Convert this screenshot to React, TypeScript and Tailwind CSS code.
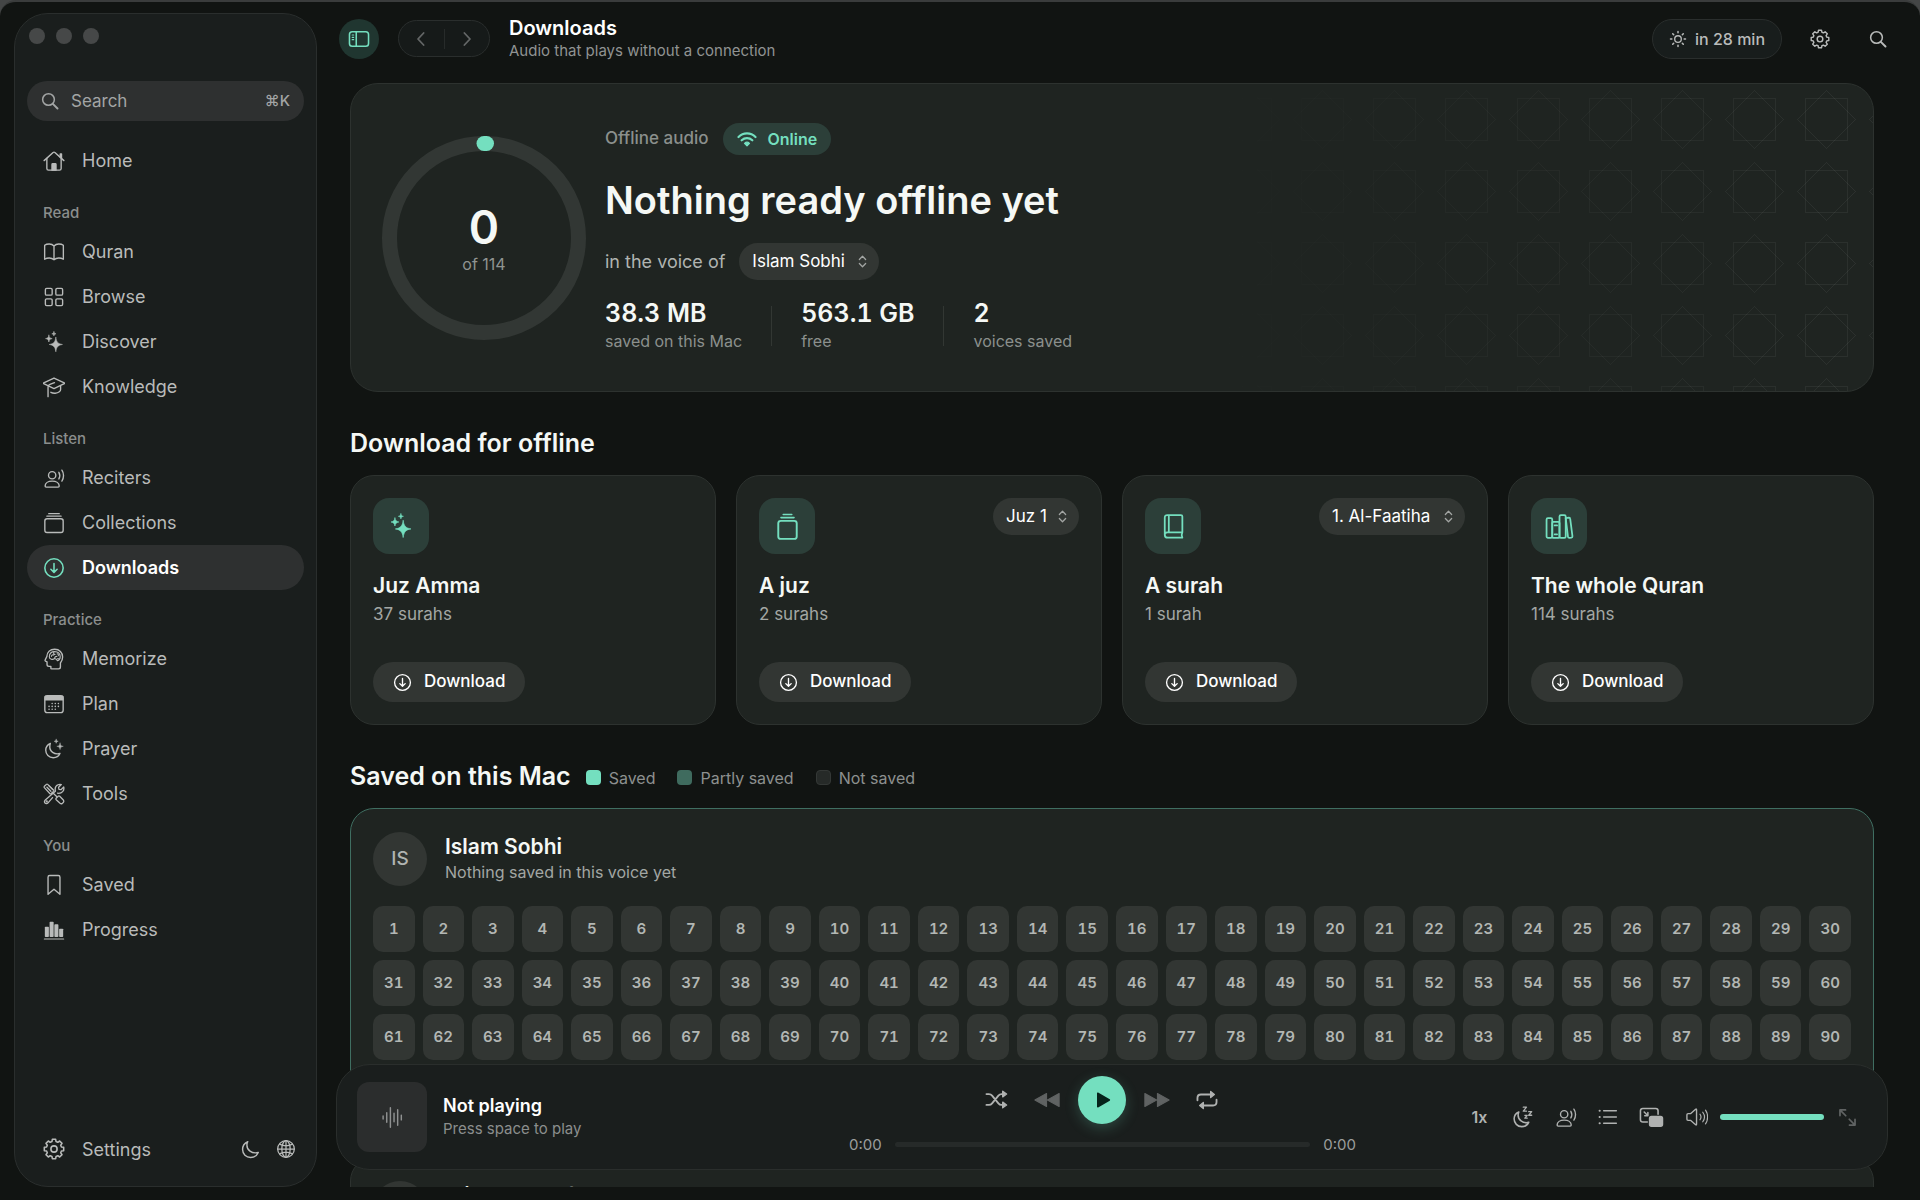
import type { ReactNode } from "react";

type IconProps = { className?: string };

const Svg = ({ className = "size-6", children }: { className?: string; children: ReactNode }) => (
  <svg
    viewBox="0 0 24 24"
    className={className}
    fill="none"
    stroke="currentColor"
    strokeWidth={1.5}
    strokeLinecap="round"
    strokeLinejoin="round"
    aria-hidden="true"
  >
    {children}
  </svg>
);

const SearchIcon = ({ className }: IconProps) => (
  <Svg className={className}>
    <circle cx="10" cy="10" r="7.8" strokeWidth={2} />
    <path d="M15.8 15.800 22 22" strokeWidth={2.6} />
  </Svg>
);

const HomeIcon = ({ className }: IconProps) => (
  <Svg className={className}>
    <path d="M1.2 11.6 11 2.7q1-.8 2 0l9.8 8.9" />
    <path d="M18.8 8V4.4h1.4v4.8" />
    <path d="M4.2 9.2v11q0 1.8 1.8 1.8h12q1.8 0 1.8-1.8v-11" />
    <path d="M9.8 22v-6.2q0-.8.8-.8h2.8q.8 0 .8.8V22z" fill="currentColor" />
  </Svg>
);

const BookOpenIcon = ({ className }: IconProps) => (
  <Svg className={className}>
    <path d="M12 5.5C10.600 3.900 8.800 3.300 6.800 3.300S3 3.800 1.800 4.700v15.200c1.300-.8 3-1.300 5-1.300s3.800.6 5.200 1.900c1.400-1.300 3.200-1.900 5.200-1.900s3.700.5 5 1.300V4.700c-1.200-.9-3-1.400-5-1.400S13.400 3.900 12 5.500zm0 0v15" />
  </Svg>
);

const GridIcon = ({ className }: IconProps) => (
  <Svg className={className}>
    <rect x="2.600" y="2.600" width="7.400" height="7.400" rx="1.400" />
    <rect x="14" y="2.600" width="7.400" height="7.400" rx="1.400" />
    <rect x="2.600" y="14" width="7.400" height="7.400" rx="1.400" />
    <rect x="14" y="14" width="7.400" height="7.400" rx="1.400" />
  </Svg>
);

const SparklesIcon = ({ className }: IconProps) => (
  <Svg className={className}>
    <g fill="currentColor" strokeWidth={0.6}>
      <path d="M14 7c.7 4.900 2.200 6.900 7.200 7.700-5 .8-6.500 2.800-7.200 8-.7-5.200-2.200-7.200-7.200-8 5-.8 6.500-2.800 7.200-7.700z" />
      <path d="M6.400 4.600c.4 2.500 1.300 3.300 3.600 3.700-2.300.4-3.200 1.200-3.600 3.700C6 9.500 5.100 8.700 2.800 8.300 5.100 7.900 6 7.100 6.400 4.600z" />
      <path d="M11.900.8c.2 1.400.8 2 2.300 2.300-1.500.3-2.100.9-2.300 2.300-.2-1.400-.8-2-2.300-2.300 1.500-.3 2.100-.9 2.300-2.300z" />
    </g>
  </Svg>
);

const GraduationIcon = ({ className }: IconProps) => (
  <Svg className={className}>
    <path d="M12 2.200 23.200 7.500q.8.400 0 .8L12 13.700.8 8.300q-.8-.4 0-.8z" />
    <path d="M12.500 7.300 7.600 9.200q-2.100.9-2.100 3V22.500" />
    <path d="M8.600 17.800c2.600 1.500 6.800 1.300 9.200-.6q1.400-1 1.400-2.400V10.500" />
  </Svg>
);

const VoiceIcon = ({ className }: IconProps) => (
  <Svg className={className}>
    <circle cx="10" cy="9" r="4" />
    <path d="M2.300 20.800c0-3.300 3.200-5.400 7.700-5.400s7.700 2.100 7.700 5.400c0 .8-.4 1.200-1.200 1.200h-13c-.8 0-1.200-.4-1.200-1.200z" />
    <path d="M17.300 5.800c1.200 2 1.200 5 0 7.200M20.600 3.400c2.400 3.400 2.400 8.600 0 12" />
  </Svg>
);

const StackIcon = ({ className }: IconProps) => (
  <Svg className={className}>
    <rect x="2" y="7.400" width="20" height="15" rx="2.400" />
    <path d="M4.200 4.600h15.600M6.200 1.800h11.600" strokeWidth={1.300} />
  </Svg>
);

const TallStackIcon = ({ className }: IconProps) => (
  <Svg className={className}>
    <rect x="3.800" y="7" width="16.400" height="16" rx="2.200" strokeWidth={1.700} />
    <path d="M6.200 4.100h11.600M8.200 1.300h7.600" strokeWidth={1.400} />
  </Svg>
);

const DownloadIcon = ({ className }: IconProps) => (
  <Svg className={className}>
    <circle cx="12" cy="12" r="10" strokeWidth={1.700} />
    <path d="M12 7v9.600M8.600 13.400 12 16.800l3.400-3.400" strokeWidth={1.700} />
  </Svg>
);

const BrainIcon = ({ className }: IconProps) => (
  <Svg className={className}>
    <path d="M8.600 22.400v-2.300H6.400q-2 0-2-2v-3l-1.600-.7q-.9-.5-.4-1.400l1.800-3.700C4.400 4.600 7.800 1.400 12.700 1.400c5.200 0 8.700 3.500 8.700 8.500 0 2.700-.9 4.800-2.400 6.500v4.400q0 2-2 2h-6.400q-1.300 0-2-.4z" />
    <g strokeWidth={1.200}>
      <path d="M6.900 9.700c0-3.600 2.400-5.800 5.900-5.800s6 2.300 6 5.700c0 2.200-1.300 3.900-3.100 4.300-.5-1.600-1.800-2.400-3.300-2.100-1.700 1-5.500.700-5.500-2.100z" />
      <path d="M9.200 9.200c.2-1.400 1.300-2 2.500-1.500M11.800 4.500c-.6 1.300 0 2.400 1.300 2.500M12.600 11.500c.3-1.900 1.300-2.600 2.600-2.300M15.400 6.300c1.200.2 1.700 1.100 1.300 2.200M16 11.600l1.800.4" />
    </g>
  </Svg>
);

const CalendarIcon = ({ className }: IconProps) => (
  <Svg className={className}>
    <rect x="2" y="3" width="20" height="18.400" rx="2.600" />
    <path d="M2.400 3.700h19.200v3.700H2.400z" fill="currentColor" />
    <path d="M10 11.400h.01M13.400 11.400h.01M16.800 11.400h.01M6.600 14.600h.01M10 14.600h.01M13.400 14.600h.01M16.800 14.600h.01M6.600 17.800h.01M10 17.800h.01M13.400 17.800h.01" strokeWidth={1.700} />
  </Svg>
);

const MoonStarsIcon = ({ className }: IconProps) => (
  <Svg className={className}>
    <path d="M8 6C4.800 7.300 3 10 3 13.400 3 18 6.500 21.500 11.200 21.500c3.300 0 6-1.700 7.300-4.600-5.800 1.700-11.900-2-11-8.700.1-.8.300-1.500.5-2.200z" />
    <g fill="currentColor" strokeWidth={0.5}>
      <path d="M18.600 5.600c.3 2.300 1.100 3.200 3.500 3.500-2.400.3-3.200 1.200-3.500 3.500-.3-2.300-1.100-3.200-3.500-3.500 2.400-.3 3.200-1.200 3.500-3.500z" />
      <path d="M14.400 1.400c.2 1.400.8 2 2.200 2.200-1.400.2-2 .8-2.200 2.200-.2-1.400-.8-2-2.200-2.200 1.400-.2 2-.8 2.200-2.200z" />
    </g>
  </Svg>
);

const ToolsIcon = ({ className }: IconProps) => (
  <Svg className={className}>
    <g strokeWidth={1.400}>
      <path d="M1.500 3.600 3.700 1.500q.7-.6 1.400 0l6.300 6q.8.800.1 1.600L9 11.500q-.8.700-1.600 0L1.500 5.100q-.6-.8 0-1.500z" />
      <path d="M4.300 4.600 8.600 9M6.300 2.900l4.200 4.200M10.600 10.600l4 3.900M14.300 16.700l2.300-2.300q.8-.6 1.600 0l4 4.200q1 1.400-.1 2.700l-1 .9q-1.300.9-2.500-.1l-4.200-3.900q-.7-.8-.1-1.500z" />
      <path d="M13.600 8.700c-.8-2.900.2-5.600 2.700-6.800 1.300-.6 2.500-.7 3.700-.2l-3 3 .4 2.200 2.200.4 3-3c1 3.800-1.900 7.600-6.700 6.800M13.500 9l-11 9.600c-1.100 1.100-1.200 2.400-.3 3.300s2.300.8 3.300-.3l4.900-5.700" />
      <circle cx="4.100" cy="20.100" r=".5" />
    </g>
  </Svg>
);

const BookmarkIcon = ({ className }: IconProps) => (
  <Svg className={className}>
    <path d="M5.500 3.500q0-1.800 1.800-1.800h9.400q1.800 0 1.800 1.800v18.700L12 16.600l-6.500 5.600z" />
  </Svg>
);

const BarsIcon = ({ className }: IconProps) => (
  <Svg className={className}>
    <path d="M1.500 21.800h21" strokeWidth={1.300} />
    <g fill="currentColor" stroke="none">
      <rect x="2" y="8.500" width="4.400" height="11" rx=".8" />
      <rect x="7.200" y="3" width="4.400" height="16.500" rx=".8" />
      <rect x="12.400" y="5.800" width="4.400" height="13.700" rx=".8" />
      <rect x="17.600" y="10.500" width="4.400" height="9" rx=".8" />
    </g>
  </Svg>
);

// Eight rounded teeth around the hub
const gearPath = Array.from({ length: 8 })
  .map((_, i) => {
    const base = (i * Math.PI) / 4 - Math.PI / 2;
    return [
      [-0.27, 8.4],
      [-0.17, 10.7],
      [0.17, 10.7],
      [0.27, 8.4],
    ]
      .map(([a, r], j) => `${i + j === 0 ? "M" : "L"}${(12 + r * Math.cos(base + a)).toFixed(2)} ${(12 + r * Math.sin(base + a)).toFixed(2)}`)
      .join("");
  })
  .join("");

const GearIcon = ({ className }: IconProps) => (
  <Svg className={className}>
    <path d={`${gearPath}Z`} strokeWidth={1.700} />
    <circle cx="12" cy="12" r="3.400" strokeWidth={1.700} />
  </Svg>
);

const MoonIcon = ({ className }: IconProps) => (
  <Svg className={className}>
    <path d="M8.500 2.200C4.500 3.900 2 7.500 2 12c0 5.700 4.500 10 10.200 10 4.300 0 8-2.400 9.600-6.200C14 17.800 6.500 13 7.600 4.800c.1-.9.500-1.800.9-2.600z" strokeWidth={1.800} />
  </Svg>
);

const GlobeIcon = ({ className }: IconProps) => (
  <Svg className={className}>
    <circle cx="12" cy="12" r="10" />
    <ellipse cx="12" cy="12" rx="5" ry="10" />
    <path d="M12 2v20M2 12h20M4.200 6.200c4.500 2.200 11.100 2.200 15.600 0M4.200 17.800c4.500-2.200 11.100-2.200 15.600 0" />
  </Svg>
);

const SidebarIcon = ({ className }: IconProps) => (
  <Svg className={className}>
    <rect x="1.600" y="4" width="20.800" height="16" rx="3" strokeWidth={1.700} />
    <path d="M9 4v16" strokeWidth={1.700} />
    <path d="M4.500 7.700h1.700M4.500 10.200h1.700M4.500 12.700h1.700" strokeWidth={1.200} />
  </Svg>
);

const SunIcon = ({ className }: IconProps) => (
  <Svg className={className}>
    <circle cx="12" cy="12" r="4.400" strokeWidth={1.800} />
    <path d="M12 2v1.800M12 20.200V22M2 12h1.800M20.200 12H22M4.900 4.900l1.300 1.300M17.800 17.800l1.300 1.300M4.900 19.100l1.300-1.300M17.800 6.200l1.300-1.300" strokeWidth={2} />
  </Svg>
);

const WifiIcon = ({ className }: IconProps) => (
  <Svg className={className}>
    <path d="M1.800 9.600C7.500 3.900 16.500 3.900 22.200 9.600M5.600 13.500c3.700-3.500 9.100-3.500 12.800 0" strokeWidth={2.600} />
    <path d="M12 20.300l-3-3.100c1.700-1.600 4.300-1.600 6 0z" fill="currentColor" />
  </Svg>
);

const ChevronsIcon = ({ className }: IconProps) => (
  <svg viewBox="0 0 10 14" className={className} fill="none" stroke="currentColor" strokeWidth={1.400} strokeLinecap="round" strokeLinejoin="round" aria-hidden="true">
    <path d="M1.500 4.800 5 1.200l3.500 3.600M1.500 9.200 5 12.800l3.500-3.600" />
  </svg>
);

const ClosedBookIcon = ({ className }: IconProps) => (
  <Svg className={className}>
    <path d="M20.500 17.600V2.400q0-1.400-1.400-1.400H6.200Q3.600 1 3.600 3.600v16.200q0 2.900 2.800 2.900h14.100M20.500 17.600H6q-2.400.2-2.400 2.400M20.500 17.600q-1.300 2.500 0 5.100M7.500 1v16.300" strokeWidth={1.700} />
  </Svg>
);

const LibraryIcon = ({ className }: IconProps) => (
  <svg viewBox="0 0 28 24" className={className} fill="none" stroke="currentColor" strokeWidth={1.700} strokeLinejoin="round" strokeLinecap="round" aria-hidden="true">
    <rect x="1.500" y="4" width="5.500" height="19" rx="1.300" />
    <rect x="7" y="7.500" width="7" height="15.500" rx="1" />
    <path d="M9.300 11h2.400M9.300 19.500h2.400" />
    <rect x="14" y="1" width="6" height="22" rx="1.300" />
    <path d="m20 4 3-.6q1.200-.1 1.300 1l2.200 17q.1 1.200-1 1.400l-2.100.2q-1 0-1.200-1z" />
  </svg>
);

const WaveformIcon = ({ className }: IconProps) => (
  <Svg className={className}>
    <path d="M2.200 10.500v3M6 7v10M9.800 1.800v20.400M13.600 7.500v9M17.400 4v16M21.200 9.500v5" />
  </Svg>
);

const ShuffleIcon = ({ className }: IconProps) => (
  <Svg className={className}>
    <path d="M1.500 6.300h2.600q2 0 3.300 1.600l6.600 8.200q1.300 1.600 3.300 1.600h1.500M1.500 17.700h2.600q2 0 3.300-1.600L14 7.900q1.300-1.600 3.300-1.600h1.500" strokeWidth={1.900} />
    <path d="m18.500 3.400 4 2.900-4 2.900zM18.500 14.800l4 2.900-4 2.900z" fill="currentColor" />
  </Svg>
);

const BackwardIcon = ({ className }: IconProps) => (
  <Svg className={className}>
    <path d="M11.600 6v12L.8 12zM23.200 6v12l-10.800-6z" fill="currentColor" strokeWidth={1} />
  </Svg>
);

const ForwardIcon = ({ className }: IconProps) => (
  <Svg className={className}>
    <path d="M12.400 6v12l10.800-6zM.8 6v12l10.800-6z" fill="currentColor" strokeWidth={1} />
  </Svg>
);

const PlayIcon = ({ className }: IconProps) => (
  <Svg className={className}>
    <path d="M5 3v18l15.500-9z" fill="currentColor" strokeWidth={2} />
  </Svg>
);

const RepeatIcon = ({ className }: IconProps) => (
  <Svg className={className}>
    <path d="M1.600 12.300V9.800q0-3.800 3.800-3.800h11.200M22.400 11.700v2.500q0 3.800-3.800 3.800H7.400" strokeWidth={2} />
    <path d="m16 2.700 4 3.300-4 3.300zM8 14.700 4 18l4 3.300z" fill="currentColor" />
  </Svg>
);

const SleepIcon = ({ className }: IconProps) => (
  <Svg className={className}>
    <path d="M7.400 6.500C4.300 7.900 2.300 10.600 2.300 14c0 4.700 3.600 8.500 8.300 8.500 3.400 0 6.200-1.700 7.600-4.700-5.900 1.600-12.500-2.600-11.400-9.200z" strokeWidth={1.700} />
    <path d="M12.300 1.300h3.500l-3.500 4.300h3.500M18.200 6.200h3.300l-3.300 3.900h3.300M14 10.200h2.600L14 13.300h2.600" strokeWidth={1.400} />
  </Svg>
);

const QueueIcon = ({ className }: IconProps) => (
  <Svg className={className}>
    <path d="M6.800 4.500H22M6.800 12H22M6.800 19.500H22" strokeWidth={1.800} />
    <path d="M2 4.500h.01M2 12h.01M2 19.500h.01" strokeWidth={2.600} />
  </Svg>
);

const PipIcon = ({ className }: IconProps) => (
  <svg viewBox="0 0 28 24" className={className} fill="none" stroke="currentColor" strokeWidth={1.700} strokeLinecap="round" strokeLinejoin="round" aria-hidden="true">
    <path d="M10 17.500H5q-2.500 0-2.500-2.500V5.200q0-2.500 2.500-2.500h14.200q2.500 0 2.500 2.500V9" />
    <path d="m6.600 6.600 3.500 3.500M10.600 7.200v3.400H7.200" />
    <rect x="12.500" y="11.500" width="14" height="10.500" rx="2" fill="currentColor" />
  </svg>
);

const SpeakerIcon = ({ className }: IconProps) => (
  <Svg className={className}>
    <path d="M1 9.500q0-1.200 1.200-1.200h3l5.300-4.700q1-.8 1 .5v15.800q0 1.300-1 .5l-5.300-4.700h-3Q1 15.700 1 14.500z" />
    <path d="M15.300 9c1.200 1.700 1.200 4.300 0 6M18.300 6.800c2.200 3 2.200 7.400 0 10.400M21.300 4.500c3 4.200 3 10.800 0 15" strokeWidth={1.300} />
  </Svg>
);

const ExpandIcon = ({ className }: IconProps) => (
  <Svg className={className}>
    <path d="M2.500 9.500v-7h7M2.800 2.800l7 7M21.500 14.500v7h-7M21.200 21.200l-7-7" strokeWidth={2.200} />
  </Svg>
);

const ChevronIcon = ({ className }: IconProps) => (
  <Svg className={className}>
    <path d="M15.500 4 8 12l7.500 8" strokeWidth={2.400} />
  </Svg>
);

const navGroups = [
  { title: "", items: [{ label: "Home", Icon: HomeIcon }] },
  {
    title: "Read",
    items: [
      { label: "Quran", Icon: BookOpenIcon },
      { label: "Browse", Icon: GridIcon },
      { label: "Discover", Icon: SparklesIcon },
      { label: "Knowledge", Icon: GraduationIcon },
    ],
  },
  {
    title: "Listen",
    items: [
      { label: "Reciters", Icon: VoiceIcon },
      { label: "Collections", Icon: StackIcon },
      { label: "Downloads", Icon: DownloadIcon },
    ],
  },
  {
    title: "Practice",
    items: [
      { label: "Memorize", Icon: BrainIcon },
      { label: "Plan", Icon: CalendarIcon },
      { label: "Prayer", Icon: MoonStarsIcon },
      { label: "Tools", Icon: ToolsIcon },
    ],
  },
  {
    title: "You",
    items: [
      { label: "Saved", Icon: BookmarkIcon },
      { label: "Progress", Icon: BarsIcon },
    ],
  },
];

const Sidebar = () => (
  <aside className="flex w-[303px] shrink-0 flex-col rounded-[34px] border border-[#2a2e2d] bg-[#1a1e1d] px-3 pb-3">
    <div className="flex gap-[11px] px-[2px] pt-[14px]">
      <span className="size-4 rounded-full bg-[#464848]" />
      <span className="size-4 rounded-full bg-[#464848]" />
      <span className="size-4 rounded-full bg-[#464848]" />
    </div>

    <label className="mt-[37px] flex h-10 items-center gap-3 rounded-full bg-[#2e3030] px-[14px] text-[#a3a5a5]">
      <SearchIcon className="size-[18px] shrink-0" />
      <span className="sr-only">Search</span>
      <input
        type="text"
        placeholder="Search"
        className="h-full w-0 flex-1 bg-transparent text-[17px] leading-6 outline-none placeholder:text-[#a3a5a5]"
      />
      <kbd className="font-[Inter,sans-serif] text-[15px] font-medium">⌘K</kbd>
    </label>

    <nav className="mt-[17px]">
      {navGroups.map((group) => (
        <div key={group.title}>
          {group.title && (
            <h2 className="h-[46px] px-4 pt-5 text-[15px] leading-5 font-medium text-[#8b8e8d]">{group.title}</h2>
          )}
          {group.items.map(({ label, Icon }) => (
            <a
              key={label}
              href="#"
              className={`flex h-[45px] items-center gap-4 rounded-full px-[15px] text-[18px] ${
                label === "Downloads" ? "bg-[#2e3030] font-semibold text-white" : "text-[#b9bbba]"
              }`}
            >
              <Icon className={label === "Downloads" ? "size-6 p-px text-[#74dfbf]" : "size-6 p-px"} />
              {label}
            </a>
          ))}
        </div>
      ))}
    </nav>

    <div className="mt-auto flex h-[50px] items-center text-[#b9bbba]">
      <a href="#" className="flex flex-1 items-center gap-4 px-[15px] text-[18px]">
        <GearIcon className="size-6 p-px" />
        Settings
      </a>
      <button type="button" aria-label="Dark mode" className="grid size-9 place-items-center">
        <MoonIcon className="size-[19px]" />
      </button>
      <button type="button" aria-label="Language" className="grid size-9 place-items-center">
        <GlobeIcon className="size-[20px]" />
      </button>
    </div>
  </aside>
);

const Header = () => (
  <header className="flex h-[73px] shrink-0 items-center pr-[22px] pl-1">
    <button type="button" aria-label="Toggle sidebar" className="grid size-10 place-items-center rounded-full bg-[#203630] text-[#74dfbf]">
      <SidebarIcon className="size-[22px]" />
    </button>
    <div className="ml-[19px] flex h-[37px] w-[92px] items-center rounded-full border border-[#2a2e2d] bg-[#161a19] text-[#636666]">
      <button type="button" aria-label="Back" className="grid h-full flex-1 place-items-center">
        <ChevronIcon className="size-[18px]" />
      </button>
      <span className="h-5 w-px bg-[#272b2a]" />
      <button type="button" aria-label="Forward" className="grid h-full flex-1 place-items-center">
        <ChevronIcon className="size-[18px] rotate-180" />
      </button>
    </div>
    <div className="ml-[19px] flex-1">
      <h1 className="text-[20px] leading-6 font-semibold text-white">Downloads</h1>
      <p className="text-[15px] leading-[22px] text-[#909392]">Audio that plays without a connection</p>
    </div>
    <button type="button" className="flex h-10 items-center gap-2 rounded-full border border-[#2a2e2d] bg-[#181d1c] px-4 text-[16px] font-medium text-[#b9bbba]">
      <SunIcon className="size-[18px]" />
      in 28 min
    </button>
    <button type="button" aria-label="Settings" className="ml-[18px] grid size-10 place-items-center text-[#b9bbba]">
      <GearIcon className="size-5" />
    </button>
    <button type="button" aria-label="Search" className="ml-[18px] grid size-10 place-items-center text-[#b9bbba]">
      <SearchIcon className="size-[18px]" />
    </button>
  </header>
);

const PillSelect = ({ label, value, className }: { label: string; value: string; className: string }) => (
  <span className={`relative inline-flex h-[37px] items-center rounded-full bg-[#323633] ${className}`}>
    <select aria-label={label} defaultValue={value} className="h-full w-full appearance-none rounded-full bg-transparent pl-[13px] text-[17px] text-white">
      <option>{value}</option>
    </select>
    <ChevronsIcon className="pointer-events-none absolute right-3 h-[13px] w-[9px] text-[#a3a6a4]" />
  </span>
);

const stats = [
  { value: "38.3 MB", label: "saved on this Mac" },
  { value: "563.1 GB", label: "free" },
  { value: "2", label: "voices saved" },
];

const Hero = () => (
  <section className="relative flex h-[309px] items-center overflow-hidden rounded-[28px] border border-[#2d322f] bg-[#1f2421] pl-[31px]">
    {/* Khatam star lattice fading in from the left */}
    <svg className="absolute inset-0 size-full [mask-image:linear-gradient(to_right,transparent_55%,black)]" aria-hidden="true">
      <defs>
        <pattern id="khatam" width="72" height="72" patternUnits="userSpaceOnUse">
          <g fill="none" stroke="#ffffff" strokeOpacity={0.06}>
            <rect x="14.500" y="14.500" width="42" height="42" />
            <path d="M35.500 6.500 64.500 35.500 35.500 64.500 6.500 35.500z" />
          </g>
        </pattern>
      </defs>
      <rect width="100%" height="100%" fill="url(#khatam)" />
    </svg>

    <div className="relative grid size-[204px] shrink-0 place-items-center">
      <svg viewBox="0 0 204 204" className="absolute inset-0" fill="none" strokeWidth={15} aria-hidden="true">
        <circle cx="102" cy="102" r="94.500" stroke="#323734" />
        <path d="M102 7.500h2.500" stroke="#74dfbf" strokeLinecap="round" />
      </svg>
      <div className="pt-[2px] text-center">
        <div className="text-[46px] leading-[50px] font-semibold text-[#f5f8f5]">0</div>
        <div className="text-[16px] leading-6 text-[#909491]">of 114</div>
      </div>
    </div>

    <div className="relative ml-[19px] flex flex-col pt-[2px]">
      <div className="flex h-8 items-center gap-[14px]">
        <span className="text-[17px] font-medium text-[#8b908d]">Offline audio</span>
        <span className="flex h-8 items-center gap-[11px] rounded-full bg-[#2c3f39] px-[14px] text-[16px] font-semibold text-[#74dfbf]">
          <WifiIcon className="size-5" />
          Online
        </span>
      </div>
      <h2 className="mt-5 text-[38px] leading-[50px] font-semibold text-[#f5f8f5]">Nothing ready offline yet</h2>
      <div className="mt-[18px] flex items-center gap-[14px] text-[18px] text-[#b0b4b1]">
        in the voice of
        <PillSelect label="Reciter" value="Islam Sobhi" className="w-[140px]" />
      </div>
      <dl className="mt-[18px] flex items-center">
        {stats.map((s, i) => (
          <div key={s.label} className="flex items-center">
            {i > 0 && <span className="mx-[29px] h-10 w-px bg-[#323733]" />}
            <div className="flex flex-col-reverse">
              <dt className="text-[16px] leading-[26px] text-[#8b908d]">{s.label}</dt>
              <dd className="text-[25px] leading-[30px] font-semibold text-[#f5f8f5] tabular-nums">{s.value}</dd>
            </div>
          </div>
        ))}
      </dl>
    </div>
  </section>
);

const downloads = [
  { title: "Juz Amma", count: "37 surahs", Icon: SparklesIcon, iconClass: "size-[26px]" },
  { title: "A juz", count: "2 surahs", Icon: TallStackIcon, iconClass: "size-[27px]", picker: "Juz 1", pickerClass: "w-[86px]" },
  { title: "A surah", count: "1 surah", Icon: ClosedBookIcon, iconClass: "size-[25px]", picker: "1. Al-Faatiha", pickerClass: "w-[146px]" },
  { title: "The whole Quran", count: "114 surahs", Icon: LibraryIcon, iconClass: "h-[25px] w-[29px]" },
];

const DownloadCards = () => (
  <section className="mt-[33px]">
    <h2 className="text-[25px] leading-9 font-semibold text-[#f5f8f5]">Download for offline</h2>
    <div className="mt-[14px] grid grid-cols-4 gap-5">
      {downloads.map(({ title, count, Icon, iconClass, picker, pickerClass }) => (
        <article key={title} className="flex h-[250px] flex-col items-start rounded-[24px] border border-[#2d322f] bg-[#1f2421] p-[22px]">
          <div className="flex w-full items-start justify-between">
            <span className="grid size-14 place-items-center rounded-2xl bg-[#2c3f39] text-[#74dfbf]">
              <Icon className={iconClass} />
            </span>
            {picker && <PillSelect label={title} value={picker} className={pickerClass} />}
          </div>
          <h3 className="mt-[18px] text-[21px] leading-7 font-semibold text-[#f5f8f5]">{title}</h3>
          <p className="text-[17px] leading-7 text-[#a3a7a4]">{count}</p>
          <button type="button" className="mt-auto flex h-10 items-center gap-3 rounded-full bg-[#323633] px-5 text-[17px] font-medium text-white">
            <DownloadIcon className="size-[19px]" />
            Download
          </button>
        </article>
      ))}
    </div>
  </section>
);

const legend = [
  { label: "Saved", swatch: "bg-[#74dfbf]" },
  { label: "Partly saved", swatch: "bg-[#3f6b5e]" },
  { label: "Not saved", swatch: "bg-[#262a28] border border-[#343836]" },
];

const voices = [
  { initials: "IS", name: "Islam Sobhi", note: "Nothing saved in this voice yet", active: true },
  { initials: "MA", name: "Mishary Alafasy", note: "1 surah saved", active: false },
];

const SavedVoices = () => (
  <section className="mt-[33px] pb-32">
    <div className="flex items-baseline gap-[15px]">
      <h2 className="text-[25px] leading-9 font-semibold text-[#f5f8f5]">Saved on this Mac</h2>
      <ul className="flex gap-[22px] text-[16px] text-[#8d908f]">
        {legend.map(({ label, swatch }) => (
          <li key={label} className="flex items-center gap-2">
            <span className={`size-[15px] rounded-[4px] ${swatch}`} />
            {label}
          </li>
        ))}
      </ul>
    </div>
    <div className="mt-[14px] flex flex-col gap-5">
      {voices.map(({ initials, name, note, active }) => (
        <article
          key={name}
          className={`rounded-[24px] border bg-[#1f2421] px-[22px] pt-[23px] pb-[22px] ${active ? "border-[#3f6e61]" : "border-[#2d322f]"}`}
        >
          <div className="flex items-center">
            <span className="grid size-[54px] place-items-center rounded-full bg-[#323633] text-[19px] font-medium text-[#b0b4b1]">{initials}</span>
            <div className="ml-[18px] flex-1">
              <h3 className="text-[21px] leading-[26px] font-semibold text-[#f5f8f5]">{name}</h3>
              <p className="text-[16px] leading-6 text-[#a3a7a4]">{note}</p>
            </div>
            {!active && (
              <button type="button" className="h-10 rounded-full bg-[#323633] px-5 text-[17px] font-medium text-white">
                Remove
              </button>
            )}
          </div>
          {active && (
            <div className="mt-5 grid grid-cols-[repeat(30,minmax(0,1fr))] gap-2">
              {Array.from({ length: 114 }).map((_, i) => (
                <button key={i} type="button" className="h-[46px] rounded-[10px] bg-[#323633] text-[15px] font-semibold text-[#b3b7b4] tabular-nums">
                  {i + 1}
                </button>
              ))}
            </div>
          )}
        </article>
      ))}
    </div>
  </section>
);

const Player = () => (
  <footer className="absolute right-8 bottom-[30px] left-[336px] grid h-[106px] grid-cols-[33fr_34fr_34fr] items-center rounded-[34px] border border-[#2a2e2c] bg-[#1a1e1d] pr-6 pl-5">
    <div className="flex items-center gap-4">
      <span className="grid size-[70px] place-items-center rounded-xl bg-[#2b2d2d] text-[#8f9191]">
        <WaveformIcon className="size-[23px]" />
      </span>
      <div>
        <p className="text-[18px] leading-6 font-semibold text-white">Not playing</p>
        <p className="text-[15px] leading-[22px] text-[#8b8e8d]">Press space to play</p>
      </div>
    </div>

    <div className="flex flex-col items-center gap-3 pb-[5px]">
      <div className="flex items-center gap-[26px] pr-[3px]">
        <button type="button" aria-label="Shuffle" className="text-[#b0b2b1]">
          <ShuffleIcon className="size-[23px]" />
        </button>
        <button type="button" aria-label="Previous" className="text-[#606363]">
          <BackwardIcon className="size-[26px]" />
        </button>
        <button type="button" aria-label="Play" className="-mx-2 grid size-12 place-items-center rounded-full bg-[#74dfbf] text-[#06231b] shadow-[0_4px_14px_rgba(116,223,191,0.22)]">
          <PlayIcon className="ml-[2px] size-[18px]" />
        </button>
        <button type="button" aria-label="Next" className="text-[#606363]">
          <ForwardIcon className="size-[26px]" />
        </button>
        <button type="button" aria-label="Repeat" className="text-[#b0b2b1]">
          <RepeatIcon className="size-[22px]" />
        </button>
      </div>
      <div className="flex w-full items-center gap-[13px] text-[15px] leading-[18px] text-[#9b9d9c]">
        <span>0:00</span>
        <div role="progressbar" aria-label="Playback position" className="h-[5px] flex-1 rounded-full bg-[#262a29]" />
        <span>0:00</span>
      </div>
    </div>

    <div className="flex items-center justify-end text-[#b0b2b1]">
      <button type="button" className="grid h-8 w-[43px] place-items-center text-[16px] font-semibold">1x</button>
      <button type="button" aria-label="Sleep timer" className="grid h-8 w-[43px] place-items-center">
        <SleepIcon className="size-[22px]" />
      </button>
      <button type="button" aria-label="Reciter" className="grid h-8 w-[43px] place-items-center">
        <VoiceIcon className="size-[22px]" />
      </button>
      <button type="button" aria-label="Queue" className="grid h-8 w-[41px] place-items-center">
        <QueueIcon className="size-5" />
      </button>
      <button type="button" aria-label="Mini player" className="grid h-8 w-[45px] place-items-center">
        <PipIcon className="h-[22px] w-[26px]" />
      </button>
      <button type="button" aria-label="Mute" className="grid h-8 w-[47px] place-items-center">
        <SpeakerIcon className="size-[22px]" />
      </button>
      <input
        type="range"
        aria-label="Volume"
        defaultValue={100}
        className="h-[6px] w-[104px] appearance-none rounded-full bg-[#74dfbf] [&::-webkit-slider-thumb]:size-0 [&::-webkit-slider-thumb]:appearance-none"
      />
      <button type="button" aria-label="Full screen" className="ml-[7px] grid size-8 place-items-center text-[#606363]">
        <ExpandIcon className="size-[19px]" />
      </button>
    </div>
  </footer>
);

const App = () => (
  <div className="h-screen bg-[#444646] font-[Inter,sans-serif]">
    <div className="relative flex h-full overflow-hidden rounded-t-2xl border-t-2 border-[#3a3c3c] bg-[#111412] pt-[11px] pb-[13px] pl-[14px]">
      <Sidebar />
      <main className="-mt-[11px] ml-[18px] flex min-w-0 flex-1 flex-col">
        <Header />
        <div className="flex-1 overflow-y-auto pt-2 pr-[46px] pl-[15px] [scrollbar-width:none]">
          <Hero />
          <DownloadCards />
          <SavedVoices />
        </div>
      </main>
      <Player />
    </div>
  </div>
);

export default App;
